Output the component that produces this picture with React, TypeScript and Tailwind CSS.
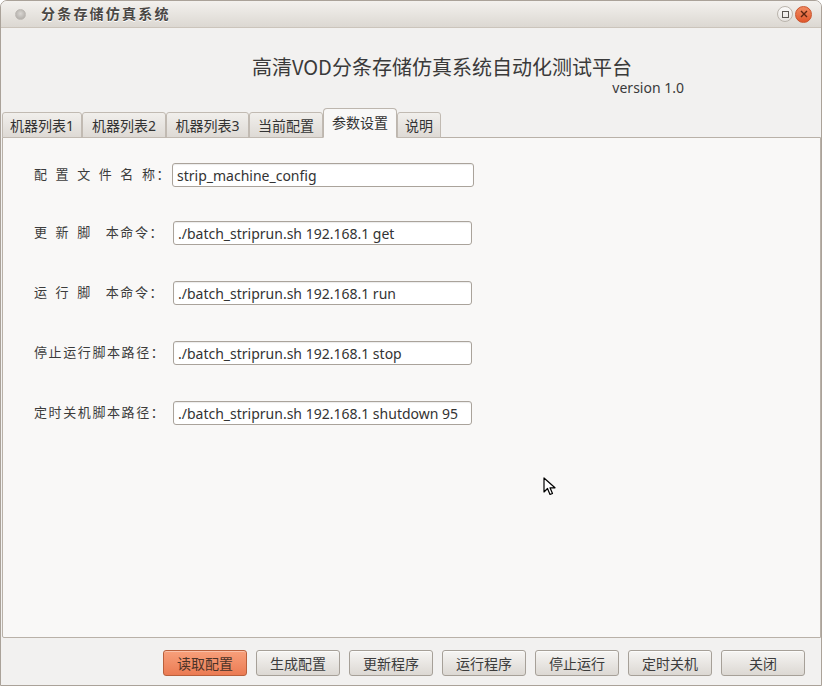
import React from "react";

const tabs = [
  { label: "机器列表1", w: "w-[80px]" },
  { label: "机器列表2", w: "w-[84px]" },
  { label: "机器列表3", w: "w-[83px]" },
  { label: "当前配置", w: "w-[74px]" },
  { label: "参数设置", w: "w-[74px]", active: true },
  { label: "说明", w: "w-[44px]" },
];

const rows = [
  { label: "配 置 文 件 名 称：", value: "strip_machine_config", mt: "mt-0", iw: "w-[302px]", ml: "ml-0" },
  { label: "更 新 脚  本命令：", value: "./batch_striprun.sh 192.168.1 get", mt: "mt-[34px]", iw: "w-[299px]", ml: "ml-[1px]" },
  { label: "运 行 脚  本命令：", value: "./batch_striprun.sh 192.168.1 run", mt: "mt-[36px]", iw: "w-[299px]", ml: "ml-[1px]" },
  { label: "停止运行脚本路径：", value: "./batch_striprun.sh 192.168.1 stop", mt: "mt-[36px]", iw: "w-[299px]", ml: "ml-[1px]" },
  { label: "定时关机脚本路径：", value: "./batch_striprun.sh 192.168.1 shutdown 95", mt: "mt-[36px]", iw: "w-[299px]", ml: "ml-[1px]" },
];

const buttons = ["读取配置", "生成配置", "更新程序", "运行程序", "停止运行", "定时关机", "关闭"];

export default function App() {
  return (
    <div className="w-[822px] h-[686px] bg-[#f2f1f0] border border-[#aaa299] rounded-t-[7px] flex flex-col overflow-hidden relative font-['Noto_Sans','Noto_Sans_CJK_SC',sans-serif] text-[#3c3c3c]">
      {/* Title bar */}
      <div className="h-[27px] shrink-0 bg-gradient-to-b from-[#f3f1ee] to-[#dcd8d2] border-b border-[#cbc4bb] flex items-center">
        <div className="ml-[14px] w-[11px] h-[11px] rounded-full bg-[radial-gradient(circle_at_50%_40%,#d9d6d2,#a9a5a0)] border border-[#bdb9b4]" />
        <div className="ml-[15px] text-[14px] leading-[18px] font-bold tracking-[2.2px] text-[#4a4744] [text-shadow:0_1px_0_#ffffff]">
          分条存储仿真系统
        </div>
        <div className="flex-1" />
        <div className="w-[16px] h-[16px] rounded-full border border-[#bab4ac] bg-gradient-to-b from-[#fbfaf9] to-[#e6e3df] flex items-center justify-center">
          <div className="w-[7px] h-[7px] border border-[#5a5651]" />
        </div>
        <div className="ml-[2px] mr-[9px] w-[17px] h-[17px] rounded-full bg-gradient-to-b from-[#f08a60] to-[#e0562a] border border-[#c9532c] flex items-center justify-center">
          <svg width="8" height="8" viewBox="0 0 8 8">
            <path d="M1 1 L7 7 M7 1 L1 7" stroke="#5a2410" strokeWidth="1.4" />
          </svg>
        </div>
      </div>

      {/* Header */}
      <div className="h-[81px] shrink-0">
        <div className="ml-[251px] pt-[26px] w-[432px] flex flex-col">
          <div className="text-[20px] leading-[26px] text-[#3a3a3a] font-['Noto_Sans_CJK_SC','Noto_Sans',sans-serif]">
            高清VOD分条存储仿真系统自动化测试平台
          </div>
          <div className="self-end text-[14px] leading-[16px] text-[#3a3a3a]">version 1.0</div>
        </div>
      </div>

      {/* Tabs */}
      <div className="h-[29px] shrink-0 flex items-end pl-[1px] relative z-10 -mb-px">
        {tabs.map((t) =>
          t.active ? (
            <div
              key={t.label}
              className={`${t.w} h-[30px] bg-[#f9f8f7] border border-[#bdb6ae] border-b-[#f9f8f7] rounded-t-[4px] flex items-center justify-center text-[14px] text-[#333] pb-[2px]`}
            >
              {t.label}
            </div>
          ) : (
            <div
              key={t.label}
              className={`${t.w} h-[26px] bg-gradient-to-b from-[#f1efec] to-[#dedad5] border border-[#c1bab2] rounded-t-[3px] flex items-center justify-center text-[14px] text-[#333]`}
            >
              {t.label}
            </div>
          )
        )}
      </div>

      {/* Panel */}
      <div className="flex-1 ml-[1px] border border-[#b9b1a8] bg-[#f9f8f7] rounded-bl-[2px] pt-[25px] pl-[31px]">
        {rows.map((r) => (
          <div key={r.label} className={`${r.mt} flex items-center`}>
            <div className="w-[138px] text-[13px] tracking-[1.6px] [word-spacing:2px] whitespace-pre text-[#3c3c3c]">{r.label}</div>
            <div
              className={`${r.ml} ${r.iw} h-[24px] bg-white border border-[#aaa39b] rounded-[3px] shadow-[inset_0_1px_1px_rgba(0,0,0,0.08)] flex items-center pl-[4px] text-[14px] text-[#333] whitespace-nowrap`}
            >
              {r.value}
            </div>
          </div>
        ))}
      </div>

      {/* Bottom buttons */}
      <div className="h-[47px] shrink-0 flex justify-end items-start pt-[12px] pr-[16px] gap-[9px]">
        {buttons.map((b, i) => (
          <div
            key={b}
            className={
              i === 0
                ? "w-[84px] h-[26px] rounded-[3px] border border-[#b9603c] bg-gradient-to-b from-[#f7a07b] to-[#eb7b53] flex items-center justify-center text-[14px] text-[#4b3328] shadow-[inset_0_1px_0_rgba(255,255,255,0.35)]"
                : "w-[84px] h-[26px] rounded-[3px] border border-[#a6a098] bg-gradient-to-b from-[#f6f5f3] to-[#dcd8d3] flex items-center justify-center text-[14px] text-[#3c3c3c] shadow-[inset_0_1px_0_rgba(255,255,255,0.7)]"
            }
          >
            {b}
          </div>
        ))}
      </div>

      {/* Mouse cursor */}
      <svg className="absolute left-[542px] top-[476px]" width="14" height="20" viewBox="0 0 14 20">
        <path d="M1 1 L1 15 L4.5 11.5 L7 17.5 L9.5 16.5 L7 10.8 L12 10.8 Z" fill="#ffffff" stroke="#000000" strokeWidth="1.2" strokeLinejoin="round" />
      </svg>
    </div>
  );
}
